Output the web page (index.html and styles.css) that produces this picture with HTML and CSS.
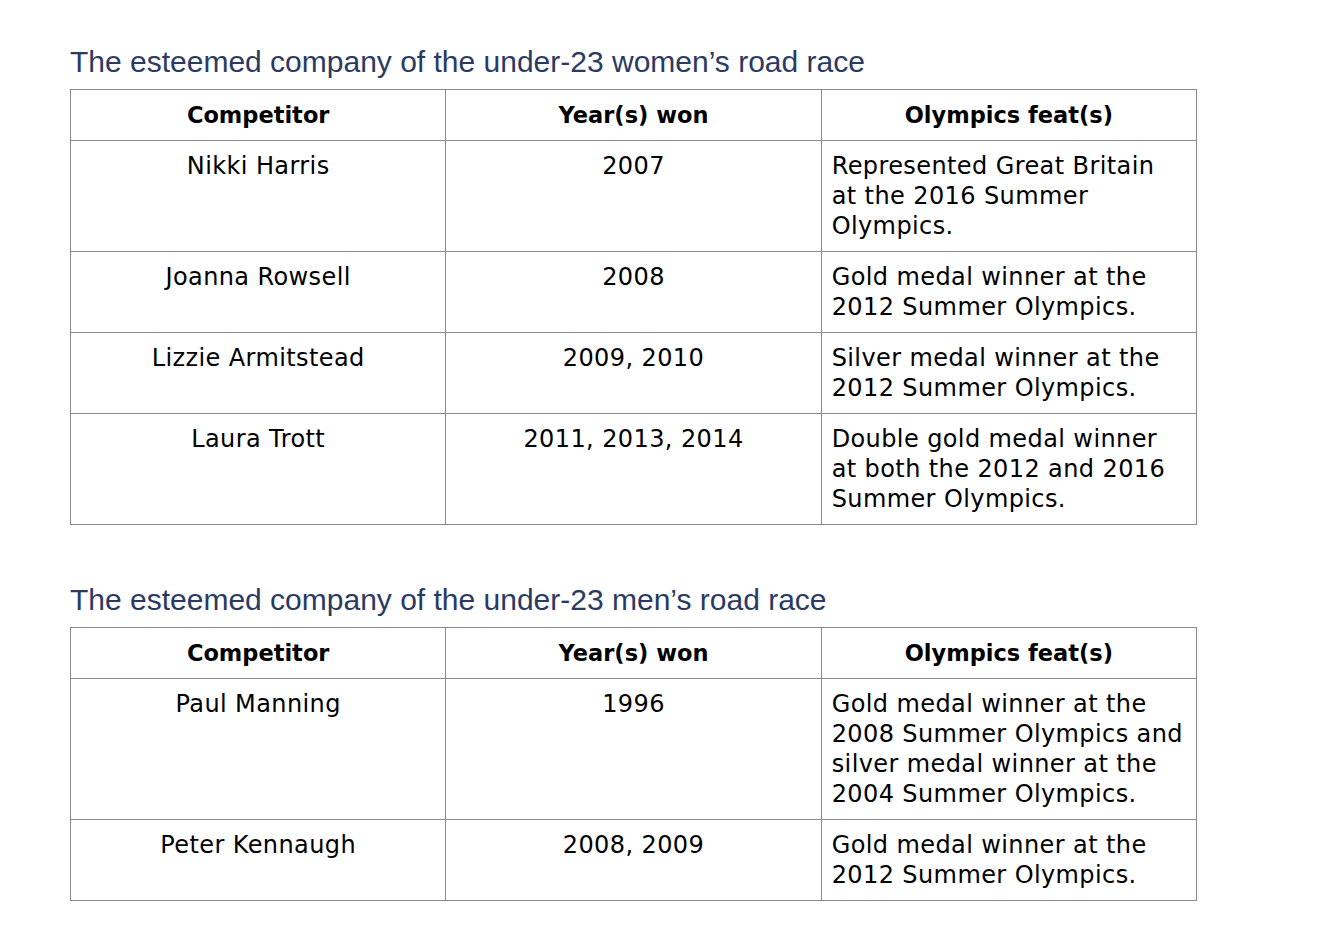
FILE: index.html
```html
<!DOCTYPE html>
<html>
<head>
<meta charset="utf-8">
<link rel="stylesheet" href="styles.css">
</head>
<body>
<div class="page">
  <section class="block">
    <h2 class="title">The esteemed company of the under-23 women’s road race</h2>
    <table class="results">
      <thead>
        <tr><th>Competitor</th><th>Year(s) won</th><th>Olympics feat(s)</th></tr>
      </thead>
      <tbody>
        <tr><td class="c">Nikki Harris</td><td class="c">2007</td><td>Represented Great Britain at the 2016 Summer Olympics.</td></tr>
        <tr><td class="c">Joanna Rowsell</td><td class="c">2008</td><td>Gold medal winner at the 2012 Summer Olympics.</td></tr>
        <tr><td class="c">Lizzie Armitstead</td><td class="c">2009, 2010</td><td>Silver medal winner at the 2012 Summer Olympics.</td></tr>
        <tr><td class="c">Laura Trott</td><td class="c">2011, 2013, 2014</td><td>Double gold medal winner at both the 2012 and 2016 Summer Olympics.</td></tr>
      </tbody>
    </table>
  </section>
  <section class="block">
    <h2 class="title">The esteemed company of the under-23 men’s road race</h2>
    <table class="results">
      <thead>
        <tr><th>Competitor</th><th>Year(s) won</th><th>Olympics feat(s)</th></tr>
      </thead>
      <tbody>
        <tr><td class="c">Paul Manning</td><td class="c">1996</td><td>Gold medal winner at the 2008 Summer Olympics and silver medal winner at the 2004 Summer Olympics.</td></tr>
        <tr><td class="c">Peter Kennaugh</td><td class="c">2008, 2009</td><td>Gold medal winner at the 2012 Summer Olympics.</td></tr>
      </tbody>
    </table>
  </section>
</div>
</body>
</html>
```
FILE: styles.css
```css
html, body {
  margin: 0;
  padding: 0;
  background: #ffffff;
}
.page {
  padding: 44px 0 0 70px;
  display: flex;
  flex-direction: column;
  gap: 57px;
}
.title {
  margin: 0 0 9px 0;
  font-family: "Liberation Sans", Arial, sans-serif;
  font-weight: normal;
  font-size: 30px;
  line-height: 36px;
  color: #2a3a63;
}
.results {
  border-collapse: collapse;
  table-layout: fixed;
  width: 1127px;
  font-family: "DejaVu Sans", sans-serif;
  font-size: 24px;
  line-height: 30px;
  letter-spacing: 0.4px;
  color: #000;
}
.results th, .results td {
  border: 1px solid #8a8a8a;
  padding: 10px 12px 10px 10px;
  vertical-align: top;
  text-align: left;
}
.results th, .results td.c {
  padding-right: 10px;
  text-align: center;
}
.results th {
  font-weight: bold;
  font-size: 22.5px;
  letter-spacing: 0;
}
```
